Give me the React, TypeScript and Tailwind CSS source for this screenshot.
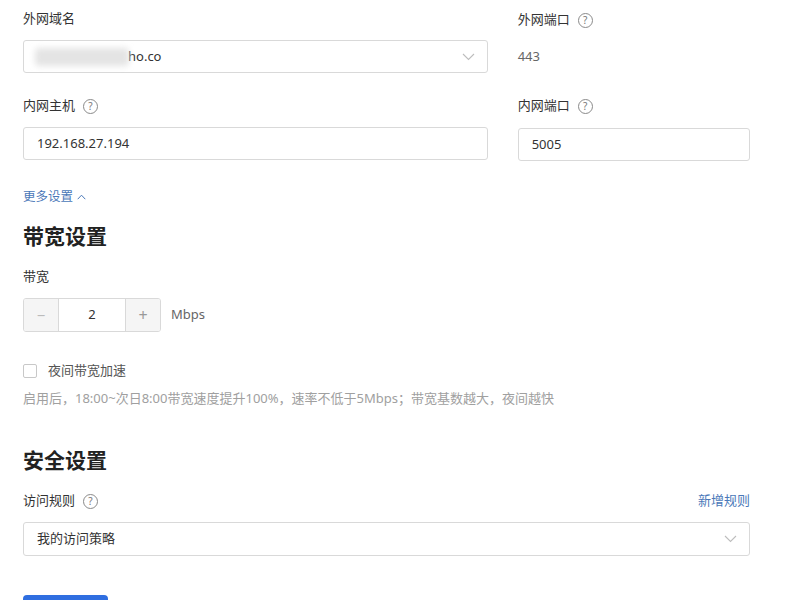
import React from "react";

function Help() {
  return (
    <span className="ml-[8px] inline-flex h-[15px] w-[15px] items-center justify-center rounded-full border border-[#8a8a8a] text-[10px] leading-none text-[#777]">
      ?
    </span>
  );
}

function ChevronDown() {
  return (
    <svg width="13" height="8" viewBox="0 0 13 8" fill="none">
      <path d="M1 1l5.5 5.5L12 1" stroke="#bdbdbd" strokeWidth="1.1" />
    </svg>
  );
}

export default function App() {
  return (
    <div className="h-[600px] w-[800px] overflow-hidden bg-white pl-[23px] pr-[50px] font-['Noto_Sans','Noto_Sans_CJK_SC',sans-serif] text-[13px] text-[#333]">
      <div className="grid grid-cols-[2fr_1fr] gap-x-[30px] pt-[8px]">
        <div>
          <div className="flex h-[22px] items-center">外网域名</div>
          <div className="mt-[10px] flex h-[33px] items-center justify-between rounded-[3px] border border-[#d9d9d9] pl-[11px] pr-[12px]">
            <div className="flex items-center">
              <div className="h-[18px] w-[94px] rounded-sm bg-[#e4e4e4] blur-[3px]" />
              <span className="-ml-[1px]">ho.co</span>
            </div>
            <ChevronDown />
          </div>
        </div>
        <div>
          <div className="flex h-[22px] items-center pt-[2px]">
            外网端口
            <Help />
          </div>
          <div className="mt-[10px] flex h-[33px] items-center text-[#666]">443</div>
        </div>

        <div className="mt-[22px]">
          <div className="flex h-[22px] items-center">
            内网主机
            <Help />
          </div>
          <div className="mt-[10px] flex h-[33px] items-center rounded-[3px] border border-[#d9d9d9] pl-[13px]">
            192.168.27.194
          </div>
        </div>
        <div className="mt-[22px]">
          <div className="flex h-[22px] items-center">
            内网端口
            <Help />
          </div>
          <div className="mt-[11px] flex h-[33px] items-center rounded-[3px] border border-[#d9d9d9] pl-[13px]">
            5005
          </div>
        </div>
      </div>

      <div className="mt-[27px] flex h-[18px] items-center text-[12.5px] text-[#4a78b8]">
        更多设置
        <svg className="ml-[4px]" width="9" height="6" viewBox="0 0 9 6" fill="none">
          <path d="M0.7 5.2L4.5 1.2l3.8 4" stroke="#4a78b8" strokeWidth="1" />
        </svg>
      </div>

      <div className="mt-[16px] flex h-[30px] items-center text-[21px] font-bold text-[#222]">带宽设置</div>

      <div className="mt-[14px] flex h-[22px] items-center">带宽</div>
      <div className="mt-[10px] flex items-center">
        <div className="flex h-[34px] w-[138px] overflow-hidden rounded-[3px] border border-[#d9d9d9]">
          <div className="flex w-[35px] items-center justify-center border-r border-[#d9d9d9] bg-[#f5f5f5] text-[15px] text-[#bbb]">
            −
          </div>
          <div className="flex flex-1 items-center justify-center text-[#333]">2</div>
          <div className="flex w-[35px] items-center justify-center border-l border-[#d9d9d9] bg-[#f5f5f5] text-[16px] text-[#999]">
            +
          </div>
        </div>
        <span className="ml-[10px] text-[#666]">Mbps</span>
      </div>

      <div className="mt-[29px] flex h-[20px] items-center">
        <span className="h-[14px] w-[14px] rounded-[2px] border border-[#c8c8c8] bg-white" />
        <span className="ml-[11px] text-[#555]">夜间带宽加速</span>
      </div>
      <div className="mt-[8px] flex h-[20px] items-center text-[13px] text-[#a0a0a0]">
        启用后，18:00~次日8:00带宽速度提升100%，速率不低于5Mbps；带宽基数越大，夜间越快
      </div>

      <div className="mt-[37px] flex h-[30px] items-center text-[21px] font-bold text-[#222]">安全设置</div>

      <div className="mt-[14px] flex h-[22px] items-center justify-between">
        <div className="flex items-center">
          访问规则
          <Help />
        </div>
        <span className="text-[#4a78b8]">新增规则</span>
      </div>
      <div className="mt-[10px] flex h-[34px] items-center justify-between rounded-[3px] border border-[#d9d9d9] pl-[13px] pr-[12px]">
        <span>我的访问策略</span>
        <ChevronDown />
      </div>

      <div className="mt-[39px] h-[32px] w-[85px] rounded-[4px] bg-[#2f6ee0]" />
    </div>
  );
}
